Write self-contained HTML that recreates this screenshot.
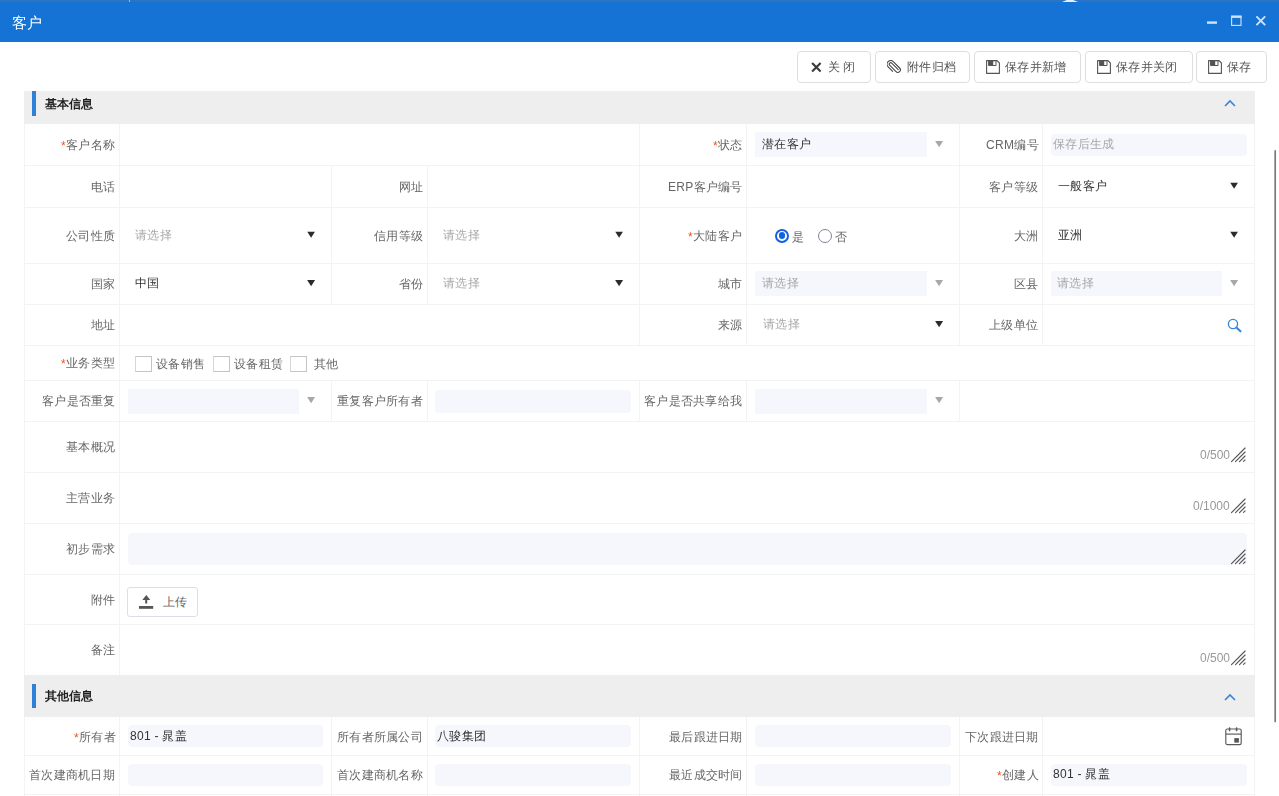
<!DOCTYPE html>
<html><head><meta charset="utf-8">
<style>
*{margin:0;padding:0;box-sizing:border-box}
html,body{width:1279px;height:796px;overflow:hidden;background:#fff;font-family:"Liberation Sans",sans-serif;position:relative}
.lb,.val,.ph,.lb0,.cnt,.btn span,.hdr .ht,#title .t{will-change:transform}
.a{position:absolute}
#title{left:0;top:0;width:1279px;height:42px;background:#1473d4}
#title .strip{left:0;top:0;width:1279px;height:2px;background:#2b74c1}
#title .t{left:12px;top:13px;font-size:15px;line-height:20px;color:#fff}
.btn{position:absolute;top:51px;height:32px;border:1px solid #dedede;border-radius:4px;background:#fff;color:#555;font-size:12px;line-height:31px;white-space:nowrap}
.btn span{position:absolute;top:0;letter-spacing:0.25px}
.hdr{position:absolute;left:24px;width:1231px;background:#eeeeee}
.hdr .bar{position:absolute;left:8px;width:4px;background:#2f80d9}
.hdr .ht{position:absolute;left:21px;font-size:12px;font-weight:bold;color:#1e1e1e;line-height:20px}
.hl{position:absolute;left:24px;width:1231px;height:1px;background:#f0f0f0}
.vl{position:absolute;width:1px;background:#f0f0f0}
.lb{position:absolute;font-size:12px;color:#666;line-height:16px;white-space:nowrap;text-align:right;letter-spacing:0.3px}
.lb i{font-style:normal;color:#f3501e;position:relative;top:1px}
.val{position:absolute;font-size:12px;color:#333;line-height:16px;white-space:nowrap;letter-spacing:0.3px}
.lb0{position:absolute;font-size:12px;color:#666;line-height:16px;white-space:nowrap;letter-spacing:0.3px}
.ph{position:absolute;font-size:12px;color:#a8a8a8;line-height:16px;white-space:nowrap;letter-spacing:0.3px}
.dis{position:absolute;background:#f5f7fd;border-radius:4px}
.tri{position:absolute;width:0;height:0;border-left:4.5px solid transparent;border-right:4.5px solid transparent;border-top:8px solid #333}
.tri.g{border-top-color:#a0a0a0}
.cnt{position:absolute;font-size:12px;color:#999;line-height:14px}
</style></head><body>

<!-- title bar -->
<div id="title" class="a">
  <div class="a strip"></div><div class="a" style="left:129px;top:0;width:1px;height:2px;background:#a5b6c9"></div><div class="a" style="left:1062px;top:0;width:16px;height:2px;background:#e8eef5;clip-path:polygon(30% 0,70% 0,100% 100%,0 100%)"></div>
  <div class="a t">客户</div>
  <!-- minimize -->
  <svg class="a" style="left:1207px;top:20px" width="10" height="5" viewBox="0 0 10 5"><rect x="0" y="1.4" width="10" height="2.4" fill="#d3e2f3"/></svg>
  <!-- maximize -->
  <svg class="a" style="left:1230px;top:15px" width="13" height="12" viewBox="0 0 13 12"><rect x="1.6" y="1.2" width="9.4" height="9.2" fill="none" stroke="#d3e2f3" stroke-width="1.1"/><rect x="1.1" y="0.7" width="10.4" height="2.2" fill="#d3e2f3"/></svg>
  <!-- close -->
  <svg class="a" style="left:1255px;top:15px" width="12" height="12" viewBox="0 0 12 12"><path d="M1.4 1.4L10.2 10.2M10.2 1.4L1.4 10.2" stroke="#d3e2f3" stroke-width="1.9"/></svg>
</div>

<!-- toolbar -->
<div class="btn" style="left:797px;width:74px">
  <svg class="a" style="left:13px;top:10px" width="11" height="11" viewBox="0 0 11 11"><path d="M1.1 1.1L9.6 9.6M9.6 1.1L1.1 9.6" stroke="#3a3a3a" stroke-width="2.1"/></svg>
  <span style="left:30px">关</span><span style="left:45px">闭</span>
</div>
<div class="btn" style="left:875px;width:95px">
  <svg class="a" style="left:11px;top:7px" width="15" height="16" viewBox="-7.5 -8 15 16"><g transform="translate(-1 0) rotate(-45) scale(1.13)"><path d="M1.3 5V-3.5A1.3 1.3 0 0 0 -1.3 -3.5V4.45A2.25 2.25 0 0 0 3.2 4.45V-3.5A3.2 3.2 0 0 0 -3.2 -3.5V2.5" fill="none" stroke="#444" stroke-width="0.95"/></g></svg>
  <span style="left:31px">附件归档</span>
</div>
<div class="btn" style="left:974px;width:107px">
  <svg class="a" style="left:11px;top:8px" width="14" height="14" viewBox="0 0 14 14"><path d="M0.6 0.6H11L13.4 3V13.4H0.6Z" fill="none" stroke="#555" stroke-width="1.1" stroke-linejoin="round"/><path d="M2.6 0.6H10V5.5H2.6Z" fill="none" stroke="#555" stroke-width="1"/><rect x="2.6" y="0.6" width="4.6" height="4.9" fill="#555"/></svg>
  <span style="left:30px">保存并新增</span>
</div>
<div class="btn" style="left:1085px;width:108px">
  <svg class="a" style="left:11px;top:8px" width="14" height="14" viewBox="0 0 14 14"><path d="M0.6 0.6H11L13.4 3V13.4H0.6Z" fill="none" stroke="#555" stroke-width="1.1" stroke-linejoin="round"/><path d="M2.6 0.6H10V5.5H2.6Z" fill="none" stroke="#555" stroke-width="1"/><rect x="2.6" y="0.6" width="4.6" height="4.9" fill="#555"/></svg>
  <span style="left:30px">保存并关闭</span>
</div>
<div class="btn" style="left:1196px;width:71px">
  <svg class="a" style="left:11px;top:8px" width="14" height="14" viewBox="0 0 14 14"><path d="M0.6 0.6H11L13.4 3V13.4H0.6Z" fill="none" stroke="#555" stroke-width="1.1" stroke-linejoin="round"/><path d="M2.6 0.6H10V5.5H2.6Z" fill="none" stroke="#555" stroke-width="1"/><rect x="2.6" y="0.6" width="4.6" height="4.9" fill="#555"/></svg>
  <span style="left:30px">保存</span>
</div>

<!-- section 1 header -->
<div class="hdr" style="top:91px;height:33px">
  <div class="bar" style="top:0;height:25px"></div>
  <div class="ht" style="top:3px">基本信息</div>
  <svg class="a" style="left:1199.5px;top:8px" width="12" height="8" viewBox="0 0 12 8"><path d="M1 7L6 2L11 7" fill="none" stroke="#3585d8" stroke-width="1.6"/></svg>
</div>


<div class="a" style="left:119px;top:124px;width:1px;height:41px;background:#f3f3f3"></div>
<div class="a" style="left:639px;top:124px;width:1px;height:41px;background:#f3f3f3"></div>
<div class="a" style="left:746px;top:124px;width:1px;height:41px;background:#f3f3f3"></div>
<div class="a" style="left:959px;top:124px;width:1px;height:41px;background:#f3f3f3"></div>
<div class="a" style="left:1042px;top:124px;width:1px;height:41px;background:#f3f3f3"></div>
<div class="a" style="left:24px;top:124px;width:1px;height:41px;background:#f3f3f3"></div>
<div class="a" style="left:1254px;top:124px;width:1px;height:41px;background:#f3f3f3"></div>
<div class="a" style="left:119px;top:165px;width:1px;height:42px;background:#f3f3f3"></div>
<div class="a" style="left:331px;top:165px;width:1px;height:42px;background:#f3f3f3"></div>
<div class="a" style="left:427px;top:165px;width:1px;height:42px;background:#f3f3f3"></div>
<div class="a" style="left:639px;top:165px;width:1px;height:42px;background:#f3f3f3"></div>
<div class="a" style="left:746px;top:165px;width:1px;height:42px;background:#f3f3f3"></div>
<div class="a" style="left:959px;top:165px;width:1px;height:42px;background:#f3f3f3"></div>
<div class="a" style="left:1042px;top:165px;width:1px;height:42px;background:#f3f3f3"></div>
<div class="a" style="left:24px;top:165px;width:1px;height:42px;background:#f3f3f3"></div>
<div class="a" style="left:1254px;top:165px;width:1px;height:42px;background:#f3f3f3"></div>
<div class="a" style="left:119px;top:207px;width:1px;height:56px;background:#f3f3f3"></div>
<div class="a" style="left:331px;top:207px;width:1px;height:56px;background:#f3f3f3"></div>
<div class="a" style="left:427px;top:207px;width:1px;height:56px;background:#f3f3f3"></div>
<div class="a" style="left:639px;top:207px;width:1px;height:56px;background:#f3f3f3"></div>
<div class="a" style="left:746px;top:207px;width:1px;height:56px;background:#f3f3f3"></div>
<div class="a" style="left:959px;top:207px;width:1px;height:56px;background:#f3f3f3"></div>
<div class="a" style="left:1042px;top:207px;width:1px;height:56px;background:#f3f3f3"></div>
<div class="a" style="left:24px;top:207px;width:1px;height:56px;background:#f3f3f3"></div>
<div class="a" style="left:1254px;top:207px;width:1px;height:56px;background:#f3f3f3"></div>
<div class="a" style="left:119px;top:263px;width:1px;height:41px;background:#f3f3f3"></div>
<div class="a" style="left:331px;top:263px;width:1px;height:41px;background:#f3f3f3"></div>
<div class="a" style="left:427px;top:263px;width:1px;height:41px;background:#f3f3f3"></div>
<div class="a" style="left:639px;top:263px;width:1px;height:41px;background:#f3f3f3"></div>
<div class="a" style="left:746px;top:263px;width:1px;height:41px;background:#f3f3f3"></div>
<div class="a" style="left:959px;top:263px;width:1px;height:41px;background:#f3f3f3"></div>
<div class="a" style="left:1042px;top:263px;width:1px;height:41px;background:#f3f3f3"></div>
<div class="a" style="left:24px;top:263px;width:1px;height:41px;background:#f3f3f3"></div>
<div class="a" style="left:1254px;top:263px;width:1px;height:41px;background:#f3f3f3"></div>
<div class="a" style="left:119px;top:304px;width:1px;height:41px;background:#f3f3f3"></div>
<div class="a" style="left:639px;top:304px;width:1px;height:41px;background:#f3f3f3"></div>
<div class="a" style="left:746px;top:304px;width:1px;height:41px;background:#f3f3f3"></div>
<div class="a" style="left:959px;top:304px;width:1px;height:41px;background:#f3f3f3"></div>
<div class="a" style="left:1042px;top:304px;width:1px;height:41px;background:#f3f3f3"></div>
<div class="a" style="left:24px;top:304px;width:1px;height:41px;background:#f3f3f3"></div>
<div class="a" style="left:1254px;top:304px;width:1px;height:41px;background:#f3f3f3"></div>
<div class="a" style="left:119px;top:345px;width:1px;height:35px;background:#f3f3f3"></div>
<div class="a" style="left:24px;top:345px;width:1px;height:35px;background:#f3f3f3"></div>
<div class="a" style="left:1254px;top:345px;width:1px;height:35px;background:#f3f3f3"></div>
<div class="a" style="left:119px;top:380px;width:1px;height:41px;background:#f3f3f3"></div>
<div class="a" style="left:331px;top:380px;width:1px;height:41px;background:#f3f3f3"></div>
<div class="a" style="left:427px;top:380px;width:1px;height:41px;background:#f3f3f3"></div>
<div class="a" style="left:639px;top:380px;width:1px;height:41px;background:#f3f3f3"></div>
<div class="a" style="left:746px;top:380px;width:1px;height:41px;background:#f3f3f3"></div>
<div class="a" style="left:959px;top:380px;width:1px;height:41px;background:#f3f3f3"></div>
<div class="a" style="left:24px;top:380px;width:1px;height:41px;background:#f3f3f3"></div>
<div class="a" style="left:1254px;top:380px;width:1px;height:41px;background:#f3f3f3"></div>
<div class="a" style="left:119px;top:421px;width:1px;height:51px;background:#f3f3f3"></div>
<div class="a" style="left:24px;top:421px;width:1px;height:51px;background:#f3f3f3"></div>
<div class="a" style="left:1254px;top:421px;width:1px;height:51px;background:#f3f3f3"></div>
<div class="a" style="left:119px;top:472px;width:1px;height:51px;background:#f3f3f3"></div>
<div class="a" style="left:24px;top:472px;width:1px;height:51px;background:#f3f3f3"></div>
<div class="a" style="left:1254px;top:472px;width:1px;height:51px;background:#f3f3f3"></div>
<div class="a" style="left:119px;top:523px;width:1px;height:51px;background:#f3f3f3"></div>
<div class="a" style="left:24px;top:523px;width:1px;height:51px;background:#f3f3f3"></div>
<div class="a" style="left:1254px;top:523px;width:1px;height:51px;background:#f3f3f3"></div>
<div class="a" style="left:119px;top:574px;width:1px;height:50px;background:#f3f3f3"></div>
<div class="a" style="left:24px;top:574px;width:1px;height:50px;background:#f3f3f3"></div>
<div class="a" style="left:1254px;top:574px;width:1px;height:50px;background:#f3f3f3"></div>
<div class="a" style="left:119px;top:624px;width:1px;height:51px;background:#f3f3f3"></div>
<div class="a" style="left:24px;top:624px;width:1px;height:51px;background:#f3f3f3"></div>
<div class="a" style="left:1254px;top:624px;width:1px;height:51px;background:#f3f3f3"></div>
<div class="a" style="left:119px;top:717px;width:1px;height:38px;background:#f3f3f3"></div>
<div class="a" style="left:331px;top:717px;width:1px;height:38px;background:#f3f3f3"></div>
<div class="a" style="left:427px;top:717px;width:1px;height:38px;background:#f3f3f3"></div>
<div class="a" style="left:639px;top:717px;width:1px;height:38px;background:#f3f3f3"></div>
<div class="a" style="left:746px;top:717px;width:1px;height:38px;background:#f3f3f3"></div>
<div class="a" style="left:959px;top:717px;width:1px;height:38px;background:#f3f3f3"></div>
<div class="a" style="left:1042px;top:717px;width:1px;height:38px;background:#f3f3f3"></div>
<div class="a" style="left:24px;top:717px;width:1px;height:38px;background:#f3f3f3"></div>
<div class="a" style="left:1254px;top:717px;width:1px;height:38px;background:#f3f3f3"></div>
<div class="a" style="left:119px;top:755px;width:1px;height:39px;background:#f3f3f3"></div>
<div class="a" style="left:331px;top:755px;width:1px;height:39px;background:#f3f3f3"></div>
<div class="a" style="left:427px;top:755px;width:1px;height:39px;background:#f3f3f3"></div>
<div class="a" style="left:639px;top:755px;width:1px;height:39px;background:#f3f3f3"></div>
<div class="a" style="left:746px;top:755px;width:1px;height:39px;background:#f3f3f3"></div>
<div class="a" style="left:959px;top:755px;width:1px;height:39px;background:#f3f3f3"></div>
<div class="a" style="left:1042px;top:755px;width:1px;height:39px;background:#f3f3f3"></div>
<div class="a" style="left:24px;top:755px;width:1px;height:39px;background:#f3f3f3"></div>
<div class="a" style="left:1254px;top:755px;width:1px;height:39px;background:#f3f3f3"></div>
<div class="a" style="left:119px;top:794px;width:1px;height:2px;background:#f3f3f3"></div>
<div class="a" style="left:331px;top:794px;width:1px;height:2px;background:#f3f3f3"></div>
<div class="a" style="left:427px;top:794px;width:1px;height:2px;background:#f3f3f3"></div>
<div class="a" style="left:639px;top:794px;width:1px;height:2px;background:#f3f3f3"></div>
<div class="a" style="left:746px;top:794px;width:1px;height:2px;background:#f3f3f3"></div>
<div class="a" style="left:959px;top:794px;width:1px;height:2px;background:#f3f3f3"></div>
<div class="a" style="left:1042px;top:794px;width:1px;height:2px;background:#f3f3f3"></div>
<div class="a" style="left:24px;top:794px;width:1px;height:2px;background:#f3f3f3"></div>
<div class="a" style="left:1254px;top:794px;width:1px;height:2px;background:#f3f3f3"></div>
<div class="a" style="left:24px;top:165px;width:1231px;height:1px;background:#f3f3f3"></div>
<div class="a" style="left:24px;top:207px;width:1231px;height:1px;background:#f3f3f3"></div>
<div class="a" style="left:24px;top:263px;width:1231px;height:1px;background:#f3f3f3"></div>
<div class="a" style="left:24px;top:304px;width:1231px;height:1px;background:#f3f3f3"></div>
<div class="a" style="left:24px;top:345px;width:1231px;height:1px;background:#f3f3f3"></div>
<div class="a" style="left:24px;top:380px;width:1231px;height:1px;background:#f3f3f3"></div>
<div class="a" style="left:24px;top:421px;width:1231px;height:1px;background:#f3f3f3"></div>
<div class="a" style="left:24px;top:472px;width:1231px;height:1px;background:#f3f3f3"></div>
<div class="a" style="left:24px;top:523px;width:1231px;height:1px;background:#f3f3f3"></div>
<div class="a" style="left:24px;top:574px;width:1231px;height:1px;background:#f3f3f3"></div>
<div class="a" style="left:24px;top:624px;width:1231px;height:1px;background:#f3f3f3"></div>
<div class="a" style="left:24px;top:755px;width:1231px;height:1px;background:#f3f3f3"></div>
<div class="a" style="left:24px;top:794px;width:1231px;height:1px;background:#f3f3f3"></div>
<div class="hdr" style="top:675px;height:42px"><div class="bar" style="top:9px;height:24px"></div><div class="ht" style="top:11px">其他信息</div><svg class="a" style="left:1199.5px;top:17.5px" width="12" height="8" viewBox="0 0 12 8"><path d="M1 7L6 2L11 7" fill="none" stroke="#3585d8" stroke-width="1.6"/></svg></div>
<div class="lb" style="right:1163.6px;top:137.0px"><i>*</i>客户名称</div>
<div class="lb" style="right:536.6px;top:137.0px"><i>*</i>状态</div>
<div class="dis" style="left:755px;top:132px;width:172px;height:25px;border-radius:0"></div>
<div class="val" style="left:762px;top:136.0px">潜在客户</div>
<svg class="a" style="left:935px;top:0px;transform:translateY(141.00px)" width="9" height="8" viewBox="0 0 9 8"><path d="M0.1 0H8.1L4.1 6.2Z" fill="#a8a8a8"/></svg>
<div class="lb" style="right:240.5999999999999px;top:137.0px">CRM编号</div>
<div class="dis" style="left:1051px;top:134px;width:196px;height:22px"></div>
<div class="ph" style="left:1053px;top:136.0px">保存后生成</div>
<div class="lb" style="right:1163.6px;top:178.5px">电话</div>
<div class="lb" style="right:855.6px;top:178.5px">网址</div>
<div class="lb" style="right:536.6px;top:178.5px">ERP客户编号</div>
<div class="lb" style="right:240.5999999999999px;top:178.5px">客户等级</div>
<div class="val" style="left:1058px;top:177.5px">一般客户</div>
<svg class="a" style="left:1230px;top:0px;transform:translateY(182.50px)" width="9" height="8" viewBox="0 0 9 8"><path d="M0.1 0H8.1L4.1 6.2Z" fill="#2b2b2b"/></svg>
<div class="lb" style="right:1163.6px;top:227.5px">公司性质</div>
<div class="ph" style="left:135px;top:226.5px">请选择</div>
<svg class="a" style="left:307px;top:0px;transform:translateY(231.50px)" width="9" height="8" viewBox="0 0 9 8"><path d="M0.1 0H8.1L4.1 6.2Z" fill="#2b2b2b"/></svg>
<div class="lb" style="right:855.6px;top:227.5px">信用等级</div>
<div class="ph" style="left:443px;top:226.5px">请选择</div>
<svg class="a" style="left:615px;top:0px;transform:translateY(231.50px)" width="9" height="8" viewBox="0 0 9 8"><path d="M0.1 0H8.1L4.1 6.2Z" fill="#2b2b2b"/></svg>
<div class="lb" style="right:536.6px;top:227.5px"><i>*</i>大陆客户</div>
<div class="a" style="left:775px;top:228.5px;width:14px;height:14px;border:2px solid #1263e3;border-radius:50%"><div class="a" style="left:1.8px;top:1.8px;width:6.4px;height:6.4px;border-radius:50%;background:#1263e3"></div></div>
<div class="lb0" style="left:792px;top:228.5px">是</div>
<div class="a" style="left:818px;top:228.5px;width:14px;height:14px;border:1.8px solid #80859a;border-radius:50%"></div>
<div class="lb0" style="left:835px;top:228.5px">否</div>
<div class="lb" style="right:240.5999999999999px;top:227.5px">大洲</div>
<div class="val" style="left:1058px;top:226.5px">亚洲</div>
<svg class="a" style="left:1230px;top:0px;transform:translateY(231.50px)" width="9" height="8" viewBox="0 0 9 8"><path d="M0.1 0H8.1L4.1 6.2Z" fill="#2b2b2b"/></svg>
<div class="lb" style="right:1163.6px;top:276.0px">国家</div>
<div class="val" style="left:135px;top:275.0px">中国</div>
<svg class="a" style="left:307px;top:0px;transform:translateY(280.00px)" width="9" height="8" viewBox="0 0 9 8"><path d="M0.1 0H8.1L4.1 6.2Z" fill="#2b2b2b"/></svg>
<div class="lb" style="right:855.6px;top:276.0px">省份</div>
<div class="ph" style="left:443px;top:275.0px">请选择</div>
<svg class="a" style="left:615px;top:0px;transform:translateY(280.00px)" width="9" height="8" viewBox="0 0 9 8"><path d="M0.1 0H8.1L4.1 6.2Z" fill="#2b2b2b"/></svg>
<div class="lb" style="right:536.6px;top:276.0px">城市</div>
<div class="dis" style="left:755px;top:271px;width:172px;height:25px;border-radius:0"></div>
<div class="ph" style="left:762px;top:275.0px">请选择</div>
<svg class="a" style="left:935px;top:0px;transform:translateY(280.00px)" width="9" height="8" viewBox="0 0 9 8"><path d="M0.1 0H8.1L4.1 6.2Z" fill="#a8a8a8"/></svg>
<div class="lb" style="right:240.5999999999999px;top:276.0px">区县</div>
<div class="dis" style="left:1051px;top:271px;width:171px;height:25px;border-radius:0"></div>
<div class="ph" style="left:1057px;top:275.0px">请选择</div>
<svg class="a" style="left:1230px;top:0px;transform:translateY(280.00px)" width="9" height="8" viewBox="0 0 9 8"><path d="M0.1 0H8.1L4.1 6.2Z" fill="#a8a8a8"/></svg>
<div class="lb" style="right:1163.6px;top:317.0px">地址</div>
<div class="lb" style="right:536.6px;top:317.0px">来源</div>
<div class="ph" style="left:763px;top:316.0px">请选择</div>
<svg class="a" style="left:935px;top:0px;transform:translateY(321.00px)" width="9" height="8" viewBox="0 0 9 8"><path d="M0.1 0H8.1L4.1 6.2Z" fill="#2b2b2b"/></svg>
<div class="lb" style="right:240.5999999999999px;top:317.0px">上级单位</div>
<svg class="a" style="left:1227px;top:317.5px" width="15" height="15" viewBox="0 0 15 15"><circle cx="6" cy="6" r="4.6" fill="none" stroke="#3a86d8" stroke-width="1.35"/><path d="M9.4 9.4L13.5 13.3" stroke="#3a86d8" stroke-width="2.1" stroke-linecap="round"/></svg>
<div class="lb" style="right:1163.6px;top:355.0px"><i>*</i>业务类型</div>
<div class="a" style="left:135px;top:356px;width:17px;height:16px;border:1px solid #c4c4c4;border-left-color:#d6d6d6"></div>
<div class="lb0" style="left:156px;top:355.5px">设备销售</div>
<div class="a" style="left:213px;top:356px;width:17px;height:16px;border:1px solid #c4c4c4;border-left-color:#d6d6d6"></div>
<div class="lb0" style="left:234px;top:355.5px">设备租赁</div>
<div class="a" style="left:290px;top:356px;width:17px;height:16px;border:1px solid #c4c4c4;border-left-color:#d6d6d6"></div>
<div class="lb0" style="left:314px;top:355.5px">其他</div>
<div class="lb" style="right:1163.6px;top:393.0px">客户是否重复</div>
<div class="dis" style="left:128px;top:389px;width:171px;height:25px;border-radius:0"></div>
<svg class="a" style="left:307px;top:0px;transform:translateY(397.00px)" width="9" height="8" viewBox="0 0 9 8"><path d="M0.1 0H8.1L4.1 6.2Z" fill="#a8a8a8"/></svg>
<div class="lb" style="right:855.6px;top:393.0px">重复客户所有者</div>
<div class="dis" style="left:435px;top:390px;width:196px;height:23px"></div>
<div class="lb" style="right:536.6px;top:393.0px">客户是否共享给我</div>
<div class="dis" style="left:755px;top:389px;width:172px;height:25px;border-radius:0"></div>
<svg class="a" style="left:935px;top:0px;transform:translateY(397.00px)" width="9" height="8" viewBox="0 0 9 8"><path d="M0.1 0H8.1L4.1 6.2Z" fill="#a8a8a8"/></svg>
<div class="lb" style="right:1163.6px;top:439.0px">基本概况</div>
<div class="cnt" style="right:49px;top:448px">0/500</div>
<svg class="a" style="left:1230px;top:446px" width="17" height="17" viewBox="0 0 17 17"><path d="M1.5 15.6L15.1 2M5.5 15.6L15.1 6M9.5 15.6L15.1 10M13.5 15.4L15.1 13.9" stroke="#555" stroke-width="1.15" stroke-linecap="round"/></svg>
<div class="lb" style="right:1163.6px;top:490.0px">主营业务</div>
<div class="cnt" style="right:49px;top:499px">0/1000</div>
<svg class="a" style="left:1230px;top:497px" width="17" height="17" viewBox="0 0 17 17"><path d="M1.5 15.6L15.1 2M5.5 15.6L15.1 6M9.5 15.6L15.1 10M13.5 15.4L15.1 13.9" stroke="#555" stroke-width="1.15" stroke-linecap="round"/></svg>
<div class="lb" style="right:1163.6px;top:541.0px">初步需求</div>
<div class="dis" style="left:128px;top:533px;width:1119px;height:32px"></div>
<svg class="a" style="left:1230px;top:548px" width="17" height="17" viewBox="0 0 17 17"><path d="M1.5 15.6L15.1 2M5.5 15.6L15.1 6M9.5 15.6L15.1 10M13.5 15.4L15.1 13.9" stroke="#555" stroke-width="1.15" stroke-linecap="round"/></svg>
<div class="lb" style="right:1163.6px;top:591.5px">附件</div>
<div class="a" style="left:127px;top:587px;width:71px;height:30px;border:1px solid #dcdfe6;border-radius:3px;background:#fff"><svg class="a" style="left:11px;top:6px" width="15" height="15" viewBox="0 0 15 15"><path d="M7.3 0.9L3.3 6.1H6.2V9.6H8.2V6.1H11.3Z" fill="#555"/><rect x="0" y="12" width="14.2" height="2.8" fill="#555"/></svg><div class="a" style="left:35px;top:6px;font-size:12px;line-height:16px;color:#666">上传</div></div>
<div class="lb" style="right:1163.6px;top:642.0px">备注</div>
<div class="cnt" style="right:49px;top:651px">0/500</div>
<svg class="a" style="left:1230px;top:649px" width="17" height="17" viewBox="0 0 17 17"><path d="M1.5 15.6L15.1 2M5.5 15.6L15.1 6M9.5 15.6L15.1 10M13.5 15.4L15.1 13.9" stroke="#555" stroke-width="1.15" stroke-linecap="round"/></svg>
<div class="lb" style="right:1163.6px;top:728.5px"><i>*</i>所有者</div>
<div class="dis" style="left:128px;top:725px;width:195px;height:22px"></div>
<div class="val" style="left:130px;top:727.5px">801 - 晁盖</div>
<div class="lb" style="right:855.6px;top:728.5px">所有者所属公司</div>
<div class="dis" style="left:435px;top:725px;width:196px;height:22px"></div>
<div class="val" style="left:437px;top:727.5px">八骏集团</div>
<div class="lb" style="right:536.6px;top:728.5px">最后跟进日期</div>
<div class="dis" style="left:755px;top:725px;width:196px;height:22px"></div>
<div class="lb" style="right:240.5999999999999px;top:728.5px">下次跟进日期</div>
<svg class="a" style="left:1225px;top:727px" width="17" height="19" viewBox="0 0 17 19"><rect x="0.8" y="2" width="15.4" height="15.6" rx="1.6" fill="none" stroke="#5a5a5a" stroke-width="1.15"/><path d="M0.8 7.1H16.2" stroke="#5a5a5a" stroke-width="1.15"/><path d="M4.6 1v2.6M11.6 1v2.6" stroke="#5a5a5a" stroke-width="1.6" stroke-linecap="round"/><rect x="9.3" y="11.1" width="4.6" height="4.5" fill="#555"/></svg>
<div class="lb" style="right:1163.6px;top:767.0px">首次建商机日期</div>
<div class="dis" style="left:128px;top:764px;width:195px;height:22px"></div>
<div class="lb" style="right:855.6px;top:767.0px">首次建商机名称</div>
<div class="dis" style="left:435px;top:764px;width:196px;height:22px"></div>
<div class="lb" style="right:536.6px;top:767.0px">最近成交时间</div>
<div class="dis" style="left:755px;top:764px;width:196px;height:22px"></div>
<div class="lb" style="right:240.5999999999999px;top:767.0px"><i>*</i>创建人</div>
<div class="dis" style="left:1051px;top:764px;width:196px;height:22px"></div>
<div class="val" style="left:1053px;top:766.0px">801 - 晁盖</div>
<svg class="a" style="left:1273px;top:149px" width="5" height="575" viewBox="0 0 5 575"><path d="M2.2 1.8V572.4" stroke="#7a7a7a" stroke-width="1.7" stroke-linecap="round"/></svg>
</body></html>
